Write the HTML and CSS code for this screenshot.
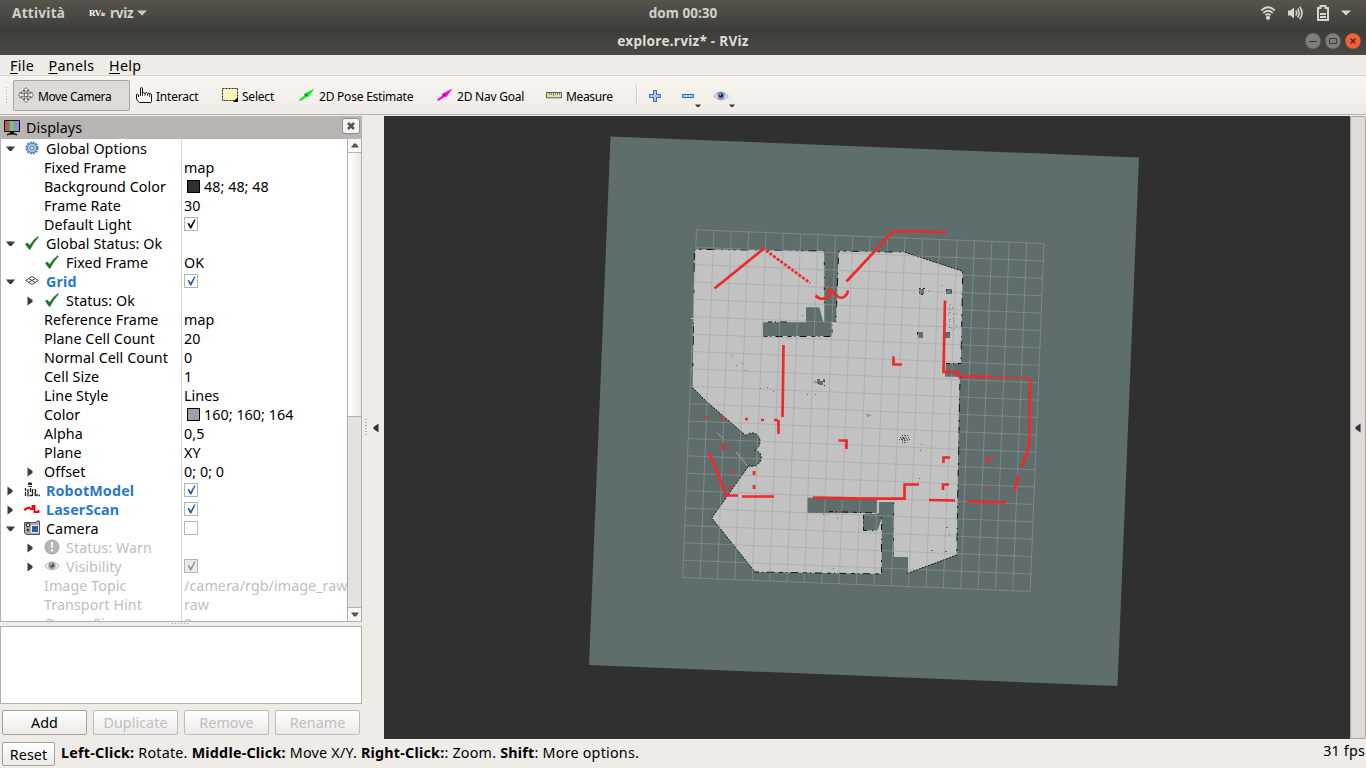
FILE: index.html
```html
<!DOCTYPE html>
<html lang="it">
<head>
<meta charset="utf-8">
<title>explore.rviz* - RViz</title>
<link rel="stylesheet" href="styles.css">
</head>
<body>
<svg class="defs" aria-hidden="true">
  <symbol id="down" viewBox="0 0 9 6"><path d="M0 .5H9L5.500 5H3.500Z" fill="#3c3c3c"/></symbol>
  <symbol id="right" viewBox="0 0 6 10"><path d="M.5 .5L5.500 4V6L.5 9.500Z" fill="#3c3c3c"/></symbol>
  <symbol id="check" viewBox="0 0 14 14"><path d="M.4 8.200Q1.800 6.300 3 7.400L4.600 9.400Q8 3.700 13 .5L13.500 1.300Q8.800 6 5.200 13.300H4Z" fill="#1c7220" stroke="#1c7220" stroke-width=".4"/></symbol>
  <symbol id="tick" viewBox="0 0 9 10"><path d="M.5 4.600L2 4.100L3.700 6.700L7.300.5H8.700L4.300 9.500H3.200Z" fill="currentColor"/></symbol>
  <symbol id="eye" viewBox="0 0 16 12"><path d="M.5 6Q7.500-2.500 15.500 6Q8 14 .5 6Z" fill="#e6e6e4" stroke="#aaa9a6"/><circle cx="8" cy="5.600" r="3.700" fill="#7187c0"/><circle cx="8" cy="5.600" r="2" fill="#171d49"/><circle cx="7.300" cy="4.700" r=".7" fill="#fff"/></symbol>
</svg>

<header class="topbar">
  <span class="activities">Attività</span>
  <span class="app"><span class="rv">RV<i>iz</i></span><span class="appname">rviz</span><svg width="10" height="6" viewBox="0 0 10 6"><path d="M0 .5H10L5 5.500Z" fill="#ccc"/></svg></span>
  <span class="clock">dom 00:30</span>
  <span class="tray">
    <svg width="14" height="14" viewBox="0 0 14 14" fill="none" stroke="#d5d5d2" stroke-width="1.800"><path d="M.3 4.500Q7-2 13.700 4.500M2.300 7Q7 2.500 11.700 7M4.500 9.200Q7 7 9.500 9.200"/><circle cx="7" cy="11.800" r="1.200" fill="#d5d5d2"/></svg>
    <svg width="16" height="14" viewBox="0 0 16 14" fill="none" stroke="#d5d5d2" stroke-width="1.600"><path d="M0 4.500H2.500L6 1.500V12.500L2.500 9.500H0Z" fill="#d5d5d2" stroke="none"/><path d="M7.700 4.500Q9.700 7 7.700 9.500M9.700 2.500Q12.700 7 9.700 11.500M11.800.7Q16.200 7 11.800 13.300"/></svg>
    <svg width="12" height="16" viewBox="0 0 12 16"><path d="M1 3H3.500V1H8.500V3H11V15H1Z" fill="none" stroke="#d5d5d2" stroke-width="2"/><path d="M3 8H9V10H3ZM3 11H9V13H3Z" fill="#d5d5d2"/></svg>
    <svg width="10" height="6" viewBox="0 0 10 6"><path d="M0 .5H10L5 5.500Z" fill="#d5d5d2"/></svg>
  </span>
</header>
<div class="titlebar"><span>explore.rviz* - RViz</span>
  <span class="winbtns">
    <svg width="16" height="16" viewBox="0 0 16 16"><circle cx="8" cy="8" r="7.700" fill="#7e7d78"/><path d="M4 8.500H12" stroke="#3b3a36"/></svg>
    <svg width="16" height="16" viewBox="0 0 16 16"><circle cx="8" cy="8" r="7.700" fill="#7e7d78"/><path d="M4.500 5.500H11.500V10.500H4.500Z" fill="none" stroke="#3b3a36"/></svg>
    <svg width="16" height="16" viewBox="0 0 16 16"><circle cx="8" cy="8" r="7.700" fill="#ee6238"/><path d="M5.500 5.500L10.500 10.500M10.500 5.500L5.500 10.500" stroke="#5a2412" stroke-width="1.300"/></svg>
  </span>
</div>
<nav class="menubar"><span><u>F</u>ile</span><span><u>P</u>anels</span><span><u>H</u>elp</span></nav>

<div class="toolbar">
  <span class="grip"></span>
  <span class="tool active"><svg width="16" height="16" viewBox="0 0 16 16" fill="#fff" stroke="#5a5a5a" stroke-width=".9"><path d="M1 5.500Q8 3 15 5.500M1 10.500Q8 13 15 10.500" fill="none" stroke="#888"/><path d="M8 .5L11 3.500H9V6.800H12.500V5L15.500 8L12.500 11V9.200H9V12.500H11L8 15.500L5 12.500H7V9.200H3.500V11L.5 8L3.500 5V6.800H7V3.500H5Z"/><circle cx="8" cy="8" r="1.800"/></svg><span>Move Camera</span></span>
  <span class="tool interact"><svg width="16" height="16" viewBox="0 0 16 16"><path d="M4.500 9V2Q4.500.5 5.500.5T6.500 2V6.500Q7.500 4.500 9 6.500Q10.500 4.500 11.500 6.500Q13 5 13.500 7Q15.500 6 15.500 8V14.500Q15.500 15.500 14.500 15.500H3.500Q1.500 14 .5 12V7.500Q2 6.500 2.500 8V10" fill="#fff" stroke="#111"/><path d="M6.500 6V9M9 6V9M11.500 6.500V9M13.500 7V10" stroke="#111" stroke-width=".8"/></svg><span>Interact</span></span>
  <span class="tool select"><svg width="16" height="14" viewBox="0 0 16 14"><path d="M.5.5H15.500V12.500H.5Z" fill="#fdf4bb" stroke="#222" stroke-dasharray="2 1"/><path d="M16 9V14H11Z"/></svg><span>Select</span></span>
  <span class="tool pose"><svg width="16" height="14" viewBox="0 0 16 14"><path d="M0 11.500L5.500 7.500L5 6L15.500.5L9.500 9L8 8.700L1.500 13Z" fill="#0cee27"/><path d="M5 7L8.500 5L8 8.500Z" fill="#078d18"/></svg><span>2D Pose Estimate</span></span>
  <span class="tool goal"><svg width="16" height="14" viewBox="0 0 16 14"><path d="M0 11.500L5.500 7.500L5 6L15.500.5L9.500 9L8 8.700L1.500 13Z" fill="#fb08d8"/><path d="M5 7L8.500 5L8 8.500Z" fill="#a6088c"/></svg><span>2D Nav Goal</span></span>
  <span class="tool measure"><svg width="16" height="7" viewBox="0 0 16 7"><path d="M.5.5H15.500V5.800H.5Z" fill="#e9dfa1" stroke="#5e5e5e"/><path d="M3.500 1V3M5.500 1V3M7.500 1V4M9.500 1V3M11.500 1V3M13.500 1V3" stroke="#888470"/></svg><span>Measure</span></span>
  <span class="sep"></span>
  <svg class="plus" width="12" height="12" viewBox="0 0 12 12"><path d="M4.500.5H7.500V4.500H11.500V7.500H7.500V11.500H4.500V7.500H.5V4.500H4.500Z" fill="#a9cbec" stroke="#3767a8"/></svg>
  <svg class="minus" width="19" height="20" viewBox="0 0 19 20"><path d="M.5 8.500H11.500V11.500H.5Z" fill="#a9cbec" stroke="#3767a8"/><path d="M13 18.500H19L17 21H15Z" fill="#3c3c3c"/></svg>
  <svg class="look" width="22" height="20" viewBox="0 0 22 20"><use href="#eye" y="4" width="16" height="12"/><path d="M16 18.500H22L20 21H18Z" fill="#3c3c3c"/></svg>
</div>

<main class="main">
  <section class="panel">
    <div class="paneltitle"><svg width="16" height="16" viewBox="0 0 16 16"><path d="M.5.500H15.500V11.500H.5Z" fill="#b95b5b" stroke="#111"/><path d="M5.500 1H10.500V11H5.500Z" fill="#73c379"/><path d="M10.500 1H15V11H10.500Z" fill="#8f8fe0"/><path d="M6 12H10V14H6Z"/><path d="M3 14.700Q8 13 13 14.700" stroke="#111" stroke-width="1.500" fill="none"/></svg><span>Displays</span>
      <span class="close"><svg width="8" height="8" viewBox="0 0 8 8"><path d="M1 1L7 7M7 1L1 7" stroke="#555" stroke-width="2.600"/></svg></span></div>
    <div class="tree">
      <div class="rows">
        <div class="row l0"><div class="name"><svg class="ar"><use href="#down" width="9" height="6" y="2"/></svg><svg class="ic" viewBox="0 0 14 14"><circle cx="7" cy="7" r="5.600" fill="none" stroke="#4f80ba" stroke-width="2" stroke-dasharray="2 .93"/><circle cx="7" cy="7" r="4.700" fill="#aac7e6" stroke="#4f80ba"/><circle cx="7" cy="7" r="1.900" fill="#e4edf7" stroke="#4f80ba"/></svg>Global Options</div><div class="val"></div></div>
        <div class="row l1"><div class="name">Fixed Frame</div><div class="val">map</div></div>
        <div class="row l1"><div class="name">Background Color</div><div class="val"><b class="sw dark"></b>48; 48; 48</div></div>
        <div class="row l1"><div class="name">Frame Rate</div><div class="val">30</div></div>
        <div class="row l1"><div class="name">Default Light</div><div class="val"><span class="cb black"><svg><use href="#tick"/></svg></span></div></div>
        <div class="row l0"><div class="name"><svg class="ar"><use href="#down" width="9" height="6" y="2"/></svg><svg class="ic"><use href="#check"/></svg>Global Status: Ok</div><div class="val"></div></div>
        <div class="row l2"><div class="name"><svg class="ar"></svg><svg class="ic"><use href="#check"/></svg>Fixed Frame</div><div class="val">OK</div></div>
        <div class="row l0"><div class="name"><svg class="ar"><use href="#down" width="9" height="6" y="2"/></svg><svg class="ic" viewBox="0 0 14 14" fill="none" stroke="#444"><path d="M.7 6.500L7 2.500L13.300 6.500L7 10.500ZM3.800 4.500L10.200 8.500M10.200 4.500L3.800 8.500"/></svg><strong>Grid</strong></div><div class="val"><span class="cb"><svg><use href="#tick"/></svg></span></div></div>
        <div class="row l2"><div class="name"><svg class="ar"><use href="#right" x="1" width="6" height="10"/></svg><svg class="ic"><use href="#check"/></svg>Status: Ok</div><div class="val"></div></div>
        <div class="row l1"><div class="name">Reference Frame</div><div class="val">map</div></div>
        <div class="row l1"><div class="name">Plane Cell Count</div><div class="val">20</div></div>
        <div class="row l1"><div class="name">Normal Cell Count</div><div class="val">0</div></div>
        <div class="row l1"><div class="name">Cell Size</div><div class="val">1</div></div>
        <div class="row l1"><div class="name">Line Style</div><div class="val">Lines</div></div>
        <div class="row l1"><div class="name">Color</div><div class="val"><b class="sw"></b>160; 160; 164</div></div>
        <div class="row l1"><div class="name">Alpha</div><div class="val">0,5</div></div>
        <div class="row l1"><div class="name">Plane</div><div class="val">XY</div></div>
        <div class="row l3"><div class="name"><svg class="ar"><use href="#right" x="1" width="6" height="10"/></svg>Offset</div><div class="val">0; 0; 0</div></div>
        <div class="row l0"><div class="name"><svg class="ar"><use href="#right" x="1" width="6" height="10"/></svg><svg class="ic wide" viewBox="0 0 16 16"><path d="M4 1Q6-.5 8 1V3H4Z" fill="#222b66"/><path d="M4.500 4.500H8" stroke="#333"/><path d="M1.500 6V9M1.500 10V14M4 7V14.500M6.500 6V10M8.500 7V14M5.500 13.500H8M10.500 7.500Q12.500 8 11 11L11.500 13.500Q13 14 13.500 12M14.500 13.500H16" fill="none" stroke="#222" stroke-width="1.300"/></svg><strong>RobotModel</strong></div><div class="val"><span class="cb"><svg><use href="#tick"/></svg></span></div></div>
        <div class="row l0"><div class="name"><svg class="ar"><use href="#right" x="1" width="6" height="10"/></svg><svg class="ic wide" viewBox="0 0 16 16"><path d="M0 8.500H1.500L3 7H5L6 6M6 8H8.500V5H10.500V11H13.500M14.500 9V12" fill="none" stroke="#f00" stroke-width="1.900"/></svg><strong>LaserScan</strong></div><div class="val"><span class="cb"><svg><use href="#tick"/></svg></span></div></div>
        <div class="row l0"><div class="name"><svg class="ar"><use href="#down" width="9" height="6" y="2"/></svg><svg class="ic wide" viewBox="0 0 16 16"><path d="M.5 2.500H12L13 1H15.500V14.500H2L.5 13Z" fill="#aaa" stroke="#555"/><circle cx="4" cy="5" r="1.800" fill="#ddd" stroke="#222"/><circle cx="4" cy="10" r="1.300" fill="#333"/><path d="M7.500 5.500H14.500V12.500H7.500Z" fill="#2f5caa" stroke="#eee"/></svg>Camera</div><div class="val"><span class="cb"></span></div></div>
        <div class="row l2 off"><div class="name"><svg class="ar"><use href="#right" x="1" width="6" height="10"/></svg><svg class="ic wide" viewBox="0 0 16 16"><circle cx="8" cy="8" r="7" fill="#b5b5b5" stroke="#a2a2a2"/><path d="M7 3H9L8.700 9H7.300ZM7 10.500H9V12.500H7Z" fill="#fff"/></svg>Status: Warn</div><div class="val"></div></div>
        <div class="row l2 off"><div class="name"><svg class="ar"><use href="#right" x="1" width="6" height="10"/></svg><svg class="ic wide gray" viewBox="0 0 16 16"><use href="#eye" y="2" width="16" height="12"/></svg>Visibility</div><div class="val"><span class="cb"><svg><use href="#tick"/></svg></span></div></div>
        <div class="row l1 off"><div class="name">Image Topic</div><div class="val">/camera/rgb/image_raw</div></div>
        <div class="row l1 off"><div class="name">Transport Hint</div><div class="val">raw</div></div>
        <div class="row l1 off"><div class="name">Queue Size</div><div class="val">2</div></div>
      </div>
      <div class="scroll"><span class="sbtn"><svg width="8" height="5" viewBox="0 0 8 5"><path d="M0 4.500L3 .5H5L8 4.500Z" fill="#555"/></svg></span><span class="thumb"></span><span class="sbtn end"><svg width="8" height="5" viewBox="0 0 8 5"><path d="M0 .5L3 4.500H5L8 .5Z" fill="#555"/></svg></span></div>
    </div>
    <div class="dots"></div>
    <div class="info"></div>
    <div class="btns"><span class="btn">Add</span><span class="btn dis">Duplicate</span><span class="btn dis">Remove</span><span class="btn dis">Rename</span></div>
  </section>
  <div class="split"><i></i><svg width="6" height="10" viewBox="0 0 6 10"><path d="M5.500.5V9.500L.5 6V4Z" fill="#333"/></svg></div>
  <svg class="view" width="966" height="623" viewBox="384 116 966 623">
    <path d="M384 116H1350V739H384Z" fill="#303030"/>
    <path d="M610.500 136.500L1139 157.500L1117.500 686L589 665Z" fill="#5e6e6c"/>
    <g fill="#c2c2c2">
      <path d="M694.300 249.300L824.300 251V322H823.300L819.300 307.300H806V322.300H763V336H831.700V322H836L838.700 251L905 252.300L962.700 271.300L961 363.300H946L945 376.700H960L959 400L956.700 555L908 573V557H892.700L893.700 502.300H879V513L807.300 511V497.700H807L877 499V514H863V530.300H877.300L881.700 517V574L755 572L711.700 518L748 466.700Q752 467 756 465.500Q762 462 761 456Q760 451 754 450Q760 448 760 441Q759 433 752 433Q748 433 746 435.700L706.700 401.700L692.700 387.700L693.500 318Z"/>
      <path d="M691 318H694V319H691Z"/>
    </g>
    <path d="M807.300 497.700H877V513H807.300ZM863 515.500H881V520L877.300 530.300H863ZM879 502.300H893.700V557H908V575H882V517H879Z" fill="#5e6e6c"/>
    <path d="M717 433L724 439M736 452L745 463L749 467" stroke="#c2c2c2" stroke-dasharray="2 1" fill="none"/>
    <g fill="none" stroke="#111">
      <path d="M694.500 249.300L824.300 251M838.700 251L905 252.300" stroke-dasharray="1 4 2 5 8 7 1 6"/>
      <path d="M905 252.300L962.700 271.300M692.700 387.700L706.700 401.700L746 435.700M748 466.700L711.700 518L755 572M956.700 555L906 574" stroke-dasharray="2 1.200"/>
      <path d="M746 435.700Q748 433 752 433Q759 433 760 441Q760 448 754 450Q760 451 761 456Q762 462 756 465.500Q750 467 747 465" stroke-dasharray="2 1.400"/>
      <path d="M694.500 250L693.500 318L692.700 387.700" stroke-dasharray="1 2 7 3 9 18 3 30"/>
      <path d="M838.700 251L836 322M962.700 271.300L961 363.300M960 377L956.700 555M881.500 517V574" stroke-dasharray="2 5 6 9 1 4 8 8"/>
      <path d="M893.500 503V557M824.300 252V307" stroke-dasharray="1 9 3 12"/>
      <path d="M763.500 336.500H832V322M768 322H788M946 363.500H961M829 511.500L877 513M863.500 515V530.500H873M755 572L882 574" stroke-dasharray="4 3 1 4 7 5"/>
    </g>
    <g fill="#5e6e6c">
      <path d="M817 379h3v2h3v-2h2v3h-2v3h-4v-2h-4v-1h2zM814 381h1v1h-1z"/>
      <path d="M919 289h5v5h-5zM946 289h6v5h-6zM918 332h5v6h-5zM945 332h5v6h-5z"/>
    </g>
    <path d="M919 288h2v1h-2zM923 288h2v1h-2zM919 292h1v1h-1zM921 294h2v1h-2zM946 289h1v2h-1zM951 291h1v2h-1zM917 332h2v1h-2zM917 333h1v2h-1zM949 332h1v1h-1zM824 381h1v1h-1zM824 385h1v1h-1zM818 383h1v1h-1z" fill="#222"/>
    <g stroke="#4d5b59" stroke-dasharray="1 1 2 1 1 2" fill="none"><path d="M902 435.500H908M900 437.500H909M901 438.500H908M899 439.500H910M902 440.500H909M902 442.500H907"/></g>
    <path d="M866 414h3v1h2v1h-2v1h-2v-2h-1z" fill="#929292"/>
    <g stroke="#5e6e6c" stroke-dasharray="1 4 1 2 1 6" fill="none"><path d="M944 308H954M948 314H958M949 321L957 326M946 324L953 331M950 304V337M954 313V331M942 285V286M928 291H929"/></g>
    <path d="M732 355h1v1h-1zM736 365h1v1h-1zM742 363h1v1h-1zM745 370h1v1h-1zM760 388h1v1h-1zM767 387h1v1h-1zM773 391h1v1h-1zM807 394h1v1h-1zM815 394h1v1h-1zM802 315h1v1h-1zM813 342h1v1h-1zM921 444h1v1h-1zM920 450h1v1h-1zM919 478h1v1h-1zM946 527h2v1h-2zM949 534h1v1h-1zM931 550h2v1h-2zM945 551h2v1h-2zM837 518h1v1h-1zM823 514h1v1h-1zM833 568h1v1h-1z" fill="#5e6e6c"/>
    <path transform="matrix(17.375 .69 -.69 17.390 696.500 229.800)" fill="none" stroke="#a0a0a4" stroke-opacity=".5" vector-effect="non-scaling-stroke" d="M0 0V20M1 0V20M2 0V20M3 0V20M4 0V20M5 0V20M6 0V20M7 0V20M8 0V20M9 0V20M10 0V20M11 0V20M12 0V20M13 0V20M14 0V20M15 0V20M16 0V20M17 0V20M18 0V20M19 0V20M20 0V20M0 0H20M0 1H20M0 2H20M0 3H20M0 4H20M0 5H20M0 6H20M0 7H20M0 8H20M0 9H20M0 10H20M0 11H20M0 12H20M0 13H20M0 14H20M0 15H20M0 16H20M0 17H20M0 18H20M0 19H20M0 20H20"/>
    <g fill="none" stroke="#f0282a" stroke-width="2.700">
      <path d="M714.500 288.500L764 248.500"/><path d="M766 250.500L810 283" stroke-dasharray="3 1.500"/>
      <path d="M846.500 281.500L893 231.500H921L947 232.500"/>
      <path d="M815.500 295.500Q822 302 829 296L830 289L834 293Q841 302 847 294L848 290.500"/>
      <path d="M783.500 345L782.500 417M778.500 420V434"/>
      <path d="M945 300.500L943.500 372H958.500V376L990 377"/><path d="M990 377L1029 378.300" stroke-dasharray="3 2"/>
      <path d="M1030.500 378L1029.500 400V440L1028.500 448L1022 467M1018.500 475L1014.500 491"/>
      <path d="M893.500 356.500V364.500H902M838.500 440.500H846.500V449M943.500 463V457.500H950M943 490V484.500H949"/>
      <path d="M813 497.500L860 498.700H904.500V484.500H919M929 500L955 500.500M967.500 501L1006 502.500"/>
      <path d="M709 452L726.500 495.500H738M742 496.500H774M723.500 444V450M754 471V475M754 485V489M987.500 463V458H989.500M992 458H994M986 489.500H988.500"/>
      <path d="M705.500 417.500H708M722 419H725M745 419H748M761 420H764M774 420H778M729.500 472H733M729 487H732"/>
    </g>
  </svg>
  <div class="rightbar"><svg width="6" height="10" viewBox="0 0 6 10"><path d="M5.500.5V9.500L.5 6V4Z" fill="#333"/></svg></div>
</main>
<footer class="status"><span class="btn reset">Reset</span><span class="hint"><b>Left-Click:</b> Rotate. <b>Middle-Click:</b> Move X/Y. <b>Right-Click:</b>: Zoom. <b>Shift</b>: More options.</span><span class="fps">31 fps</span></footer>
</body>
</html>
```
FILE: styles.css
```css
* { box-sizing: border-box; }
body { margin: 0; width: 1366px; height: 768px; overflow: hidden; display: flex; flex-direction: column; background: #efebe7; color: #000; font: 14.3px/19px "Noto Sans", "Open Sans", sans-serif; letter-spacing: .06px; white-space: nowrap; }
svg { display: block; flex: none; }
.defs { position: absolute; width: 0; height: 0; }
.topbar { height: 28px; flex: none; display: grid; grid-template-columns: 84px 1fr 136px 1fr 84px; align-items: center; background: linear-gradient(#57544c, #403f3a); color: #d0d0cd; font-weight: 700; font-size: 13.500px; letter-spacing: .3px; line-height: 24px; padding-bottom: 2px; }
.activities { padding-left: 12px; }
.app { display: flex; align-items: center; padding-left: 5px; }
.rv { font: bold 9px/12px "Liberation Serif", serif; color: #fff; width: 21px; letter-spacing: -.4px; }
.rv i { font-size: 7px; }
.appname { margin-right: 4px; letter-spacing: -.3px; }
.clock { text-align: center; letter-spacing: 0; }
.tray { grid-column: 5; justify-self: end; display: flex; align-items: center; gap: 13px; padding-right: 15px; }
.tray svg:nth-child(3) { margin-right: -1px; }
.titlebar { height: 27px; flex: none; position: relative; text-align: center; background: linear-gradient(#3c3b37, #4a4944); color: #dfdbd2; font-weight: 700; font-size: 13.600px; letter-spacing: .25px; line-height: 26px; }
.winbtns { position: absolute; right: 5px; top: 5px; display: flex; gap: 4px; }
.menubar { height: 21px; flex: none; display: flex; gap: 14.500px; padding-left: 10px; line-height: 21px; letter-spacing: .3px; border-bottom: 1px solid #d6d2cd; }
.menubar u { text-underline-offset: 2px; }
.toolbar { height: 39px; flex: none; display: flex; align-items: center; background: linear-gradient(#f9f6f2, #eeebe7); border-bottom: 1px solid #b6b2ae; font-size: 12px; letter-spacing: -.22px; padding: 0 0 0 5px; }
.grip { width: 4px; height: 18px; margin-right: 4px; background: radial-gradient(circle, #aaa 0 .7px, transparent .8px) 0 0 / 3px 3px; }
.tool { display: flex; align-items: center; gap: 4px; }
.tool span { padding-top: 2px; }
.active { width: 117px; height: 31px; padding-left: 4px; background: #dedad7; border: 1px solid #a9a5a2; border-radius: 2px; margin-right: 6px; letter-spacing: -.4px; }
.interact { width: 86px; }
.select { width: 77px; }
.pose { width: 138px; }
.goal { width: 109px; }
.measure { width: 90px; letter-spacing: -.35px; }
.sep { width: 2px; height: 20px; border-left: 1px solid #ccc8c4; border-right: 1px solid #fff; margin-right: 11px; }
.minus { margin-left: 21px; overflow: visible; }
.look { margin-left: 12px; overflow: visible; }
.minus, .look, .plus { margin-top: 1px; }
.main { height: 624px; flex: none; display: flex; padding-top: 1px; }
.panel { width: 362px; flex: none; display: flex; flex-direction: column; }
.paneltitle { height: 23px; flex: none; background: #b7b4b1; display: flex; align-items: center; gap: 6px; padding: 0 2px 0 4px; }
.close { margin: -3px 0 0 auto; width: 18px; height: 16px; border: 1px solid #8f8c89; border-radius: 3px; background: #f5f4f2; display: grid; place-items: center; }
.tree { height: 483px; flex: none; display: flex; background: #fff; border: 1px solid #b3b0ac; border-top: 0; overflow: hidden; }
.rows { width: 346px; flex: none; overflow: hidden; }
.row { height: 19px; display: flex; }
.name { width: 181px; flex: none; border-right: 1px solid #d8d8d8; display: flex; align-items: center; }
.val { padding-left: 2px; display: flex; align-items: center; }
.l0 .name { padding-left: 5px; }
.l1 .name { padding-left: 43px; }
.l2 .name, .l3 .name { padding-left: 25px; }
.ar { width: 9px; height: 10px; margin-right: 10px; }
.l2 .ar { margin-right: 9px; }
.ic { width: 14px; height: 14px; margin: -1px 7px 0 0; }
.l2 .ic { margin-left: 1px; }
.wide { width: 16px; height: 16px; margin: -1px 6px 0 -1px; }
.l2 .wide { margin-left: 0; margin-right: 6px; }
.l3 .ar { margin-right: 9px; }
.name strong { color: #2a78c8; font-weight: 700; letter-spacing: .15px; }
.off { color: #bebebe; }
.gray { filter: grayscale(1); opacity: .8; }
.cb { width: 14px; height: 14px; border: 1px solid #b6b3b0; background: #fff; color: #1d5c9f; display: grid; place-items: center; margin-top: -1px; }
.cb svg { width: 9px; height: 10px; }
.black { color: #000; }
.off .cb { color: #959595; background: #edeae8; }
.sw { width: 13px; height: 13px; border: 1px solid #000; background: #a0a0a4; margin: 0 4px 0 3px; }
.dark { background: #303030; }
.scroll { width: 14px; display: flex; flex-direction: column; background: #e3e2df; border-left: 1px solid #b3b0ac; }
.sbtn { height: 14px; flex: none; background: #f6f5f4; display: grid; place-items: center; border-bottom: 1px solid #b3b0ac; }
.thumb { height: 264px; flex: none; background: linear-gradient(90deg, #fff, #ebe9e7); border-bottom: 1px solid #b3b0ac; }
.end { margin-top: auto; border-bottom: 0; border-top: 1px solid #b3b0ac; }
.dots { height: 4px; flex: none; width: 18px; margin: 0 auto; background: repeating-linear-gradient(90deg, #aaa 0 1px, transparent 1px 3px) 0 1px / 18px 1px no-repeat; }
.info { height: 78px; flex: none; background: #fff; border: 1px solid #b3b0ac; }
.btns { display: flex; gap: 6px; padding: 6px 2px 0; }
.btn { width: 85px; height: 25px; border: 1px solid #a5a19d; border-radius: 2px; background: linear-gradient(#fff, #eceae8); text-align: center; line-height: 23px; }
.dis { color: #bebebe; border-color: #bfbcb9; }
.split { width: 22px; flex: none; display: flex; align-items: center; padding-left: 3px; }
.split i { width: 2px; height: 17px; margin-right: 6px; background: repeating-linear-gradient(#b5b2ae 0 1px, transparent 1px 3px); }
.rightbar { width: 16px; height: 623px; background: #dedad7; border: 1px solid #aaa6a3; border-radius: 2px; display: grid; place-items: center; }
.status { height: 29px; display: flex; padding: 3px 1px 0 2px; }
.reset { width: 53px; height: 24px; flex: none; }
.hint { margin-left: 6px; line-height: 22px; letter-spacing: .23px; }
.fps { margin-left: auto; line-height: 18px; letter-spacing: .2px; }
```
